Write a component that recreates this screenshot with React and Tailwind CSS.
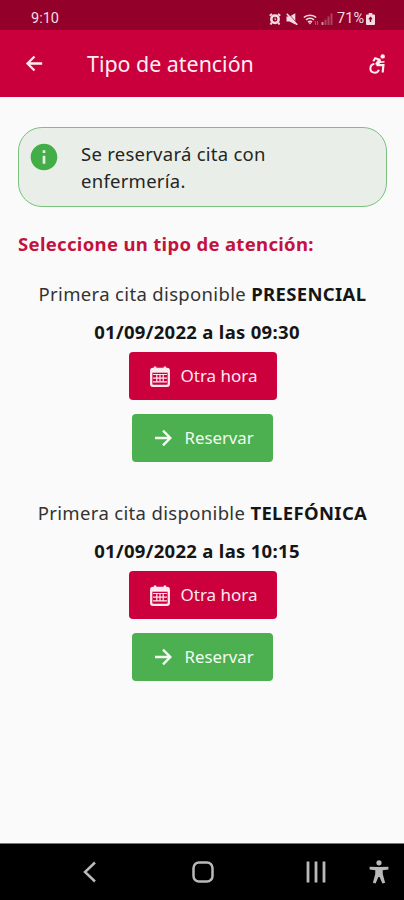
import { MdInfo } from 'react-icons/md'

const APPOINTMENTS = [
    { id: 1, type: 'PRESENCIAL', date: '01/09/2022 a las 09:30' },
    { id: 2, type: 'TELEFÓNICA', date: '01/09/2022 a las 10:15' },
]

// ─── Icons ────────────────────────────────────────────────────────────────────

function ArrowIcon({ className }) {
    return (
        <svg viewBox="0 0 24 24" className={className} fill="none" stroke="currentColor" strokeWidth="2.4">
            <path d="M4 12h15M12 4.700 19.300 12 12 19.300" />
        </svg>
    )
}

function WheelchairIcon() {
    return (
        <svg viewBox="0 0 17 20" className="w-[17px] h-5" fill="none" stroke="currentColor">
            <circle cx="13.700" cy="2.400" r="2.200" fill="currentColor" stroke="none" />
            <path d="M4.300 7.300 6.200 4.300l5.300 1.700" strokeWidth="2" />
            <path d="M10.900 5.900 7.600 11" strokeWidth="3.600" />
            <path d="M7.500 11.200h6.900l-.7 7.300" strokeWidth="2.200" />
            <path d="M5.300 10.100a4.300 4.300 0 1 0 4.500 5.600" strokeWidth="2" />
            <path d="M11 8.300l4.500-.6" strokeWidth="1.600" />
        </svg>
    )
}

function CalendarIcon() {
    return (
        <svg viewBox="0 0 20 21" className="w-5 h-[21px] shrink-0" fill="none" stroke="currentColor">
            <rect x="1.2" y="3" width="17.6" height="16.8" rx="1.8" strokeWidth="2.3" />
            <path d="M2 4.8h16" strokeWidth="3.8" />
            <path d="M5.1 0.4v4M14.9 0.4v4" strokeWidth="2.4" />
            <path d="M3 8.500h14M3 12.2h14M3 15.8h14M6.8 8.5v8M10 8.5v8M13.2 8.5v8" strokeWidth="1.2" />
        </svg>
    )
}

function AlarmIcon() {
    return (
        <svg viewBox="0 0 12 12" className="w-3 h-3" fill="none" stroke="currentColor">
            <circle cx="6" cy="6.2" r="3.7" strokeWidth="2.5" />
            <path d="M0.8 2.8 3 .9M11.2 2.800 9 .9M2.800 9.500 1.500 11.500M9.200 9.500l1.300 2" strokeWidth="2" />
            <path d="M6 4.600v2h1.200" strokeWidth="0.900" />
        </svg>
    )
}

function MuteIcon() {
    return (
        <svg viewBox="0 0 12 12" className="w-3 h-3" fill="currentColor">
            <path d="M0.500 3.500h3L9.300.3v11.200L3.500 8.500h-3z" />
            <path d="M1.800 0 11.800 11" stroke="#93002a" strokeWidth="0.900" />
            <path d="M.8 .8 11.200 11.900" stroke="currentColor" strokeWidth="1.600" />
        </svg>
    )
}

function WifiIcon() {
    return (
        <svg viewBox="0 0 16 13" className="w-4 h-[13px]" fill="none" stroke="currentColor">
            <path d="M.8 4.600C4 1.300 10 1.300 13.200 4.600M3 6.900c2.200-2.200 5.800-2.200 8 0M5 9.100c1-1 3-1 4 0" strokeWidth="1.500" />
            <path d="M5.400 9.600h3.200L7 11.600z" fill="currentColor" stroke="none" />
            <path d="M12.300 8v4M14.600 12V8" strokeWidth="1" opacity="0.4" />
        </svg>
    )
}

function SignalIcon() {
    return (
        <svg viewBox="0 0 12 12" className="w-3 h-3" fill="currentColor">
            <path d="M0.5 9h2v3h-2z" opacity="0.65" />
            <path d="M3.5 6.5h2V12h-2zM6.5 3.5h2V12h-2zM9.5 0.5h2V12h-2z" opacity="0.3" />
        </svg>
    )
}

function BatteryIcon() {
    return (
        <svg viewBox="0 0 9 12" className="w-[9px] h-3">
            <path d="M2.7 0h3.6v1.4H8a1 1 0 0 1 1 1V11a1 1 0 0 1-1 1H1a1 1 0 0 1-1-1V2.400a1 1 0 0 1 1-1h1.700z" fill="currentColor" />
            <path d="M2.800 5.200 4.500 3.400l1.700 1.800v1.300H5.200V9H3.800V6.500h-1z" fill="#93002a" />
        </svg>
    )
}

function PersonIcon() {
    return (
        <svg viewBox="0 0 20 24" className="w-5 h-6" fill="currentColor">
            <circle cx="10" cy="2.800" r="2.600" />
            <path d="M.6 6.800 10 7.100l9.400-.3v2.800l-5.700.6.100 4 2.300 8.600-2.700.8L10.600 17H9.400l-2.800 6.600-2.700-.8 2.300-8.600.1-4-5.700-.6z" />
        </svg>
    )
}

// ─── Sections ─────────────────────────────────────────────────────────────────

function StatusBar() {
    return (
        <div className="flex items-center justify-between h-[30px] pt-2 pl-[31px] pr-[29px] bg-[#93002a] text-[#f3dbe2]">
            <span className="font-[Roboto] text-[14.5px] leading-none">9:10</span>
            <div className="flex items-center">
                <AlarmIcon />
                <span className="ml-[5px]"><MuteIcon /></span>
                <span className="ml-[5px]"><WifiIcon /></span>
                <span className="ml-[2px]"><SignalIcon /></span>
                <span className="ml-[4px] mr-[2px] font-[Roboto] text-[14.5px] leading-none">71%</span>
                <BatteryIcon />
            </div>
        </div>
    )
}

function AppBar() {
    return (
        <header className="flex items-center h-[67px] pl-[23px] pr-[18px] bg-[#c9003c] text-[#fdeef2]">
            <ArrowIcon className="w-[23px] h-[23px] rotate-180" />
            <h1 className="ml-[41px] text-[21.4px] leading-none">Tipo de atención</h1>
            <span className="ml-auto"><WheelchairIcon /></span>
        </header>
    )
}

function ActionButton({ variant, icon, children }) {
    return (
        <button
            className={
                variant === 'red'
                    ? 'flex items-center pl-[21px] gap-[11px] ml-[1px] w-[148px] h-12 rounded-[4px] bg-[#cc003d] text-[#fdeaf0] text-[17px]'
                    : 'flex items-center pl-[19px] gap-[10px] w-[141px] h-12 rounded-[4px] bg-[#4caf50] text-[#f1fbf1] text-[16.8px]'
            }
        >
            {icon}
            <span className="whitespace-nowrap">{children}</span>
        </button>
    )
}

function Appointment({ type, date }) {
    return (
        <section className="flex flex-col items-center">
            <p className="ml-[1px] text-[18.5px] leading-[38px] tracking-[0.34px] whitespace-nowrap text-[#333]">
                Primera cita disponible <strong className="text-[#151515]">{type}</strong>
            </p>
            <p className="pr-[10px] text-[18.5px] font-bold leading-[38px] tracking-[0.3px] whitespace-nowrap text-[#151515]">{date}</p>
            <div className="flex flex-col items-center gap-[14px] mt-[1px]">
                <ActionButton variant="red" icon={<CalendarIcon />}>Otra hora</ActionButton>
                <ActionButton variant="green" icon={<ArrowIcon className="w-6 h-6 shrink-0" />}>Reservar</ActionButton>
            </div>
        </section>
    )
}

function NavigationBar() {
    return (
        <nav className="flex items-center h-[57px] border-t border-[#777] bg-black pl-[82px] pr-[15px] text-[#b9b9b9]">
            <svg viewBox="0 0 14 22" className="w-[14px] h-[22px]" fill="none" stroke="currentColor" strokeWidth="2.5">
                <path d="M13 1.500 3 11l10 9.500" />
            </svg>
            <svg viewBox="0 0 22 22" className="w-[22px] h-[22px] ml-[96px]" fill="none" stroke="currentColor" strokeWidth="2.500">
                <rect x="1.500" y="1.500" width="19" height="19" rx="5.500" />
            </svg>
            <svg viewBox="0 0 20 22" className="w-5 h-[22px] ml-[92px]" fill="none" stroke="currentColor" strokeWidth="2.800">
                <path d="M2 .500v21M10 .500v21M18 .500v21" />
            </svg>
            <span className="ml-auto"><PersonIcon /></span>
        </nav>
    )
}

function App() {
    return (
        <div className="flex flex-col h-screen bg-[#fafafa] font-['Noto_Sans',sans-serif]">
            <StatusBar />
            <AppBar />

            <main className="flex-1 pt-[30px]">
                <div className="flex h-20 ml-[18px] mr-[17px] pt-[13px] pl-[9px] border border-[#79c17d] rounded-[24px] bg-[#e9efe8]">
                    <MdInfo className="w-8 h-8 shrink-0 text-[#43ad48]" />
                    <p className="w-[240px] ml-[21px] text-[18.5px] leading-[26.500px] tracking-[0.26px] text-[#252525]">Se reservará cita con enfermería.</p>
                </div>

                <h2 className="mt-[24px] ml-[18px] text-[18.5px] font-bold leading-[26px] tracking-[0.32px] text-[#c4123f]">
                    Seleccione un tipo de atención:
                </h2>

                <div className="flex flex-col gap-8 mt-[18px]">
                    {APPOINTMENTS.map((item) => (
                        <Appointment key={item.id} type={item.type} date={item.date} />
                    ))}
                </div>
            </main>

            <NavigationBar />
        </div>
    )
}

export default App
